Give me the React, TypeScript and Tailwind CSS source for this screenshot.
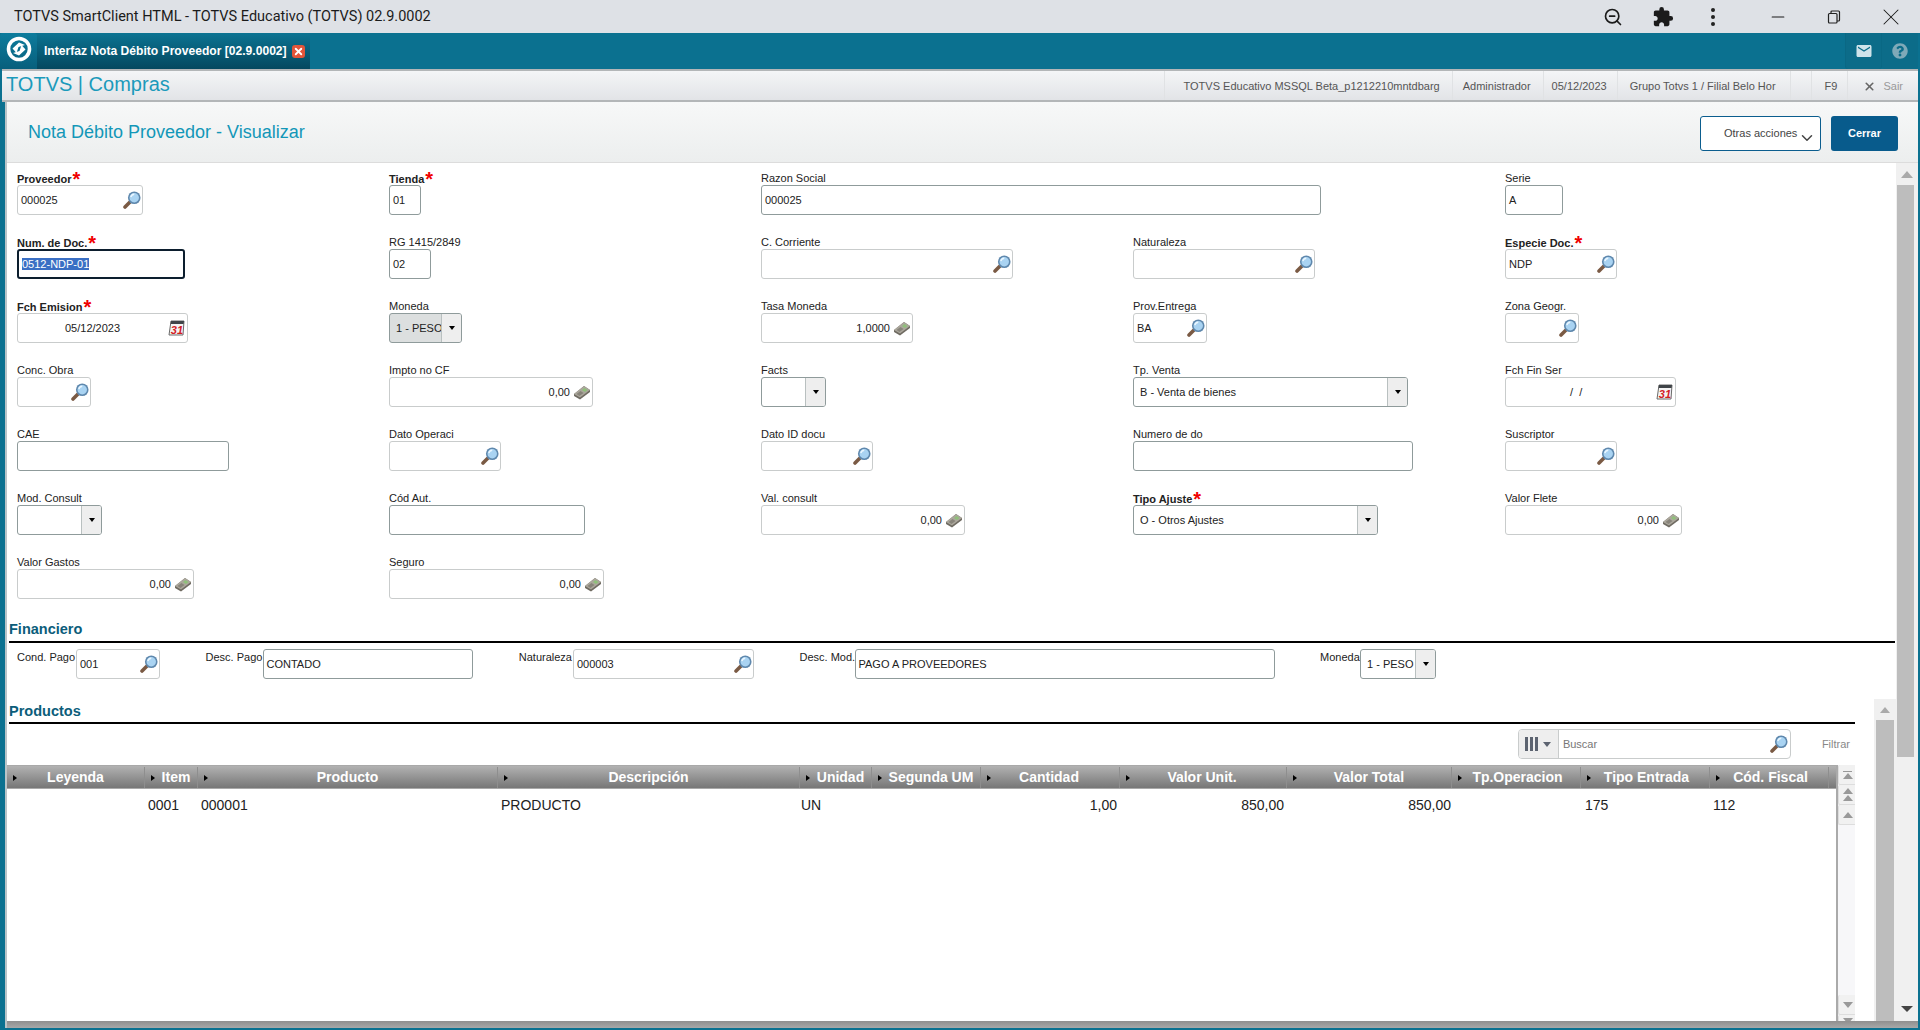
import { Minus, X, ZoomOut, ChevronDown } from "lucide-react";
import { FaQuestionCircle } from "react-icons/fa";
import { MdEmail, MdExtension } from "react-icons/md";

type FieldDef = {
    w: number
    label?: string
    req?: boolean
    value?: string
    kind?: "text" | "lookup" | "money" | "date" | "select"
    pl?: number
    disabled?: boolean
    focus?: boolean
}

function Lens() {
    return <svg width="18" height="18" viewBox="1 1 16 16" className="shrink-0">
        <line x1="7" y1="11" x2="2.8" y2="15.2" stroke="#7a5a44" strokeWidth="3.2" strokeLinecap="round" />
        <circle cx="11" cy="7" r="5.6" fill="#5f88ad" />
        <circle cx="11" cy="7" r="4.2" fill="#a9d3f2" />
        <path d="M8 6.5a3.2 3.2 0 0 1 3-2.7" stroke="#e9f6ff" strokeWidth="1.3" fill="none" />
    </svg>
}

function Money() {
    return <svg width="18" height="15" viewBox="0 0 18 15" className="shrink-0">
        <polygon points="1,9 11,1 17,5 17,7 7,14.5 1,11" fill="#6f6b62" />
        <polygon points="1,9 11,1 17,5 7,12.5" fill="#aba79c" />
        <polygon points="9,5 11.5,3 14.5,5 12,7" fill="#8fc07a" />
        <polygon points="3.5,9 7.5,6 10.5,8 6.5,11" fill="#88847a" />
    </svg>
}

function Calendar() {
    return <svg width="17" height="18" viewBox="0 0 17 18" className="shrink-0">
        <polygon points="3,2 16,2 15,16 1,16" fill="#f4f4f4" stroke="#6a6a6a" strokeWidth="1" />
        <polygon points="3,2 16,2 15.6,5 2.6,5" fill="#3f4448" />
        <text x="2.8" y="14.8" fontSize="11" fontWeight="700" fontStyle="italic" fill="#d3201f" fontFamily="Liberation Sans, sans-serif">31</text>
    </svg>
}

function Caret() {
    return <div className="flex h-full w-[20px] shrink-0 items-center justify-center border-l border-[#b9c0c0] bg-[#eeeeee]">
        <div className="h-0 w-0 border-x-[3.5px] border-t-[4px] border-x-transparent border-t-black"></div>
    </div>
}

function Field({ f }: { f: FieldDef }) {
    const kind = f.kind || "text"
    const dark = kind === "text" || kind === "select"
    let border = dark ? "border border-[#8f9b9b]" : "border border-[#c9cccc]"
    if (f.focus) border = "border-2 border-[#0c1e2e]"
    return <div className={`flex h-[30px] items-center overflow-hidden rounded-[3px] text-[11px] text-[#222] ${border} ${f.disabled ? "bg-[#dcdfdf]" : "bg-white"}`} style={{ width: f.w }}>
        <div className={`min-w-0 flex-1 overflow-hidden whitespace-nowrap ${kind === "money" ? "pr-[3px] text-right" : "pl-[3px]"} ${kind === "select" ? "pl-[6px]" : ""}`} style={f.pl ? { paddingLeft: f.pl } : undefined}>
            {f.focus ? <span className="bg-[#3a6fc4] text-white">{f.value}</span> : f.value}
        </div>
        {kind === "lookup" && <div className="mr-[1px] flex"><Lens /></div>}
        {kind === "money" && <div className="mr-[1px] flex"><Money /></div>}
        {kind === "date" && <div className="mr-[2px] flex"><Calendar /></div>}
        {kind === "select" && <Caret />}
    </div>
}

function Cell({ f }: { f: FieldDef }) {
    return <div>
        <div className={`flex h-[15px] items-end text-[11px] text-[#222] ${f.req ? "leading-[11px] font-bold" : "leading-[13px]"}`}>
            {f.label}
            {f.req && <span className="ml-[1px] mt-[2px] self-start text-[20px] leading-[14px] font-bold text-[#f00000]">*</span>}
        </div>
        <Field f={f} />
    </div>
}

const rows: (FieldDef | null)[][] = [
    [
        { w: 126, label: "Proveedor", req: true, value: "000025", kind: "lookup" },
        { w: 32, label: "Tienda", req: true, value: "01" },
        { w: 560, label: "Razon Social", value: "000025" },
        null,
        { w: 58, label: "Serie", value: "A" },
    ],
    [
        { w: 168, label: "Num. de Doc.", req: true, value: "0512-NDP-01", focus: true },
        { w: 42, label: "RG 1415/2849", value: "02" },
        { w: 252, label: "C. Corriente", kind: "lookup" },
        { w: 182, label: "Naturaleza", kind: "lookup" },
        { w: 112, label: "Especie Doc.", req: true, value: "NDP", kind: "lookup" },
    ],
    [
        { w: 171, label: "Fch Emision", req: true, value: "05/12/2023", kind: "date", pl: 47 },
        { w: 73, label: "Moneda", value: "1 - PESO", kind: "select", disabled: true },
        { w: 152, label: "Tasa Moneda", value: "1,0000", kind: "money" },
        { w: 74, label: "Prov.Entrega", value: "BA", kind: "lookup" },
        { w: 74, label: "Zona Geogr.", kind: "lookup" },
    ],
    [
        { w: 74, label: "Conc. Obra", kind: "lookup" },
        { w: 204, label: "Impto no CF", value: "0,00", kind: "money" },
        { w: 65, label: "Facts", kind: "select" },
        { w: 275, label: "Tp. Venta", value: "B - Venta de bienes", kind: "select" },
        { w: 171, label: "Fch Fin Ser", value: "/\u00a0\u00a0/", kind: "date", pl: 64 },
    ],
    [
        { w: 212, label: "CAE" },
        { w: 112, label: "Dato Operaci", kind: "lookup" },
        { w: 112, label: "Dato ID docu", kind: "lookup" },
        { w: 280, label: "Numero de do" },
        { w: 112, label: "Suscriptor", kind: "lookup" },
    ],
    [
        { w: 85, label: "Mod. Consult", kind: "select" },
        { w: 196, label: "Cód Aut." },
        { w: 204, label: "Val. consult", value: "0,00", kind: "money" },
        { w: 245, label: "Tipo Ajuste", req: true, value: "O - Otros Ajustes", kind: "select" },
        { w: 177, label: "Valor Flete", value: "0,00", kind: "money" },
    ],
    [
        { w: 177, label: "Valor Gastos", value: "0,00", kind: "money" },
        { w: 215, label: "Seguro", value: "0,00", kind: "money" },
        null,
        null,
        null,
    ],
]

const columns = [
    { name: "Leyenda", w: 138, value: "", cls: "", head: "pr-[10px]" },
    { name: "Item", w: 53, value: "0001", cls: "pl-[3px]", head: "" },
    { name: "Producto", w: 300, value: "000001", cls: "pl-[3px]", head: "pr-[10px]" },
    { name: "Descripción", w: 302, value: "PRODUCTO", cls: "pl-[3px]", head: "pr-[10px]" },
    { name: "Unidad", w: 72, value: "UN", cls: "pl-[1px]", head: "" },
    { name: "Segunda UM", w: 109, value: "", cls: "", head: "" },
    { name: "Cantidad", w: 139, value: "1,00", cls: "pr-[3px] text-right", head: "pr-[12px]" },
    { name: "Valor Unit.", w: 167, value: "850,00", cls: "pr-[3px] text-right", head: "pr-[12px]" },
    { name: "Valor Total", w: 165, value: "850,00", cls: "pr-[1px] text-right", head: "pr-[10px]" },
    { name: "Tp.Operacion", w: 129, value: "", cls: "", head: "pr-[7px]" },
    { name: "Tipo Entrada", w: 129, value: "175", cls: "pl-[4px]", head: "pr-[7px]" },
    { name: "Cód. Fiscal", w: 119, value: "112", cls: "pl-[3px]", head: "pr-[7px]" },
]

const fin = [
    { label: "Cond. Pago", lw: 59, f: { w: 84, value: "001", kind: "lookup" } as FieldDef },
    { label: "Desc. Pago", lw: 57, f: { w: 210, value: "CONTADO" } as FieldDef },
    { label: "Naturaleza", lw: 55, f: { w: 181, value: "000003", kind: "lookup" } as FieldDef },
    { label: "Desc. Mod.", lw: 55, f: { w: 420, value: "PAGO A PROVEEDORES" } as FieldDef },
    { label: "Moneda", lw: 40, f: { w: 76, value: "1 - PESO", kind: "select" } as FieldDef },
]

function ScrollBtn({ down, double, bar }: { down?: boolean, double?: boolean, bar?: boolean }) {
    const arrow = down ? "border-t-[6px] border-t-[#999]" : "border-b-[6px] border-b-[#999]"
    return <div className="flex h-[20px] w-[18px] flex-col items-center justify-center gap-[1px] rounded-[2px] border-b border-l border-[#dddddd] bg-[#f1f1f1]">
        {bar && !down && <div className="h-[1px] w-[9px] bg-[#999]"></div>}
        <div className={`h-0 w-0 border-x-[5px] border-x-transparent ${arrow}`}></div>
        {double && <div className={`h-0 w-0 border-x-[5px] border-x-transparent ${arrow}`}></div>}
        {bar && down && <div className="h-[1px] w-[9px] bg-[#999]"></div>}
    </div>
}

export default function App() {
    return <div className="flex h-[1030px] w-[1920px] flex-col overflow-hidden bg-[#0b7190] font-['Liberation_Sans',Arial,sans-serif]">
        {/* window title */}
        <div className="flex h-[33px] shrink-0 items-center bg-[#dee1e6] pl-[14px] text-[#1b1b1b]">
            <div className="font-['Roboto',sans-serif] text-[14.5px]">TOTVS SmartClient HTML - TOTVS Educativo (TOTVS) 02.9.0002</div>
            <div className="ml-auto flex items-center">
                <ZoomOut size={20} strokeWidth={2} className="mr-[29px]" />
                <MdExtension size={22} className="mr-[37px]" />
                <div className="mr-[53px] flex flex-col gap-[3px]">
                    <div className="h-[4px] w-[4px] rounded-full bg-[#222]"></div>
                    <div className="h-[4px] w-[4px] rounded-full bg-[#222]"></div>
                    <div className="h-[4px] w-[4px] rounded-full bg-[#222]"></div>
                </div>
                <Minus size={20} strokeWidth={1.3} className="mr-[39px]" />
                <svg width="14" height="14" viewBox="0 0 14 14" className="mr-[36px]" fill="none" stroke="#222" strokeWidth="1.2">
                    <rect x="1.5" y="3.5" width="8.5" height="9.5" rx="1" />
                    <path d="M4 3.5V2a1 1 0 0 1 1-1h6.5a1 1 0 0 1 1 1v8a1 1 0 0 1-1 1H10" />
                </svg>
                <X size={28} strokeWidth={0.9} className="mr-[15px]" />
            </div>
        </div>

        {/* tab bar */}
        <div className="flex h-[36px] shrink-0 items-stretch text-white">
            <div className="flex w-[37px] items-center justify-center rounded-t-[3px] bg-gradient-to-b from-[#0d7c9d] to-[#085f7c] pb-[5px]">
                <svg width="26" height="26" viewBox="0 0 26 26" fill="none">
                    <circle cx="13" cy="13" r="10.5" stroke="#fff" strokeWidth="3.6" />
                    <path d="M6.5 12.5L13 6.5l6 2.5-6.5 2-2 6z" fill="#fff" />
                    <path d="M19.5 13.5L13 19.5l-6-2.5 6.5-2 2-6z" fill="#fff" />
                </svg>
            </div>
            <div className="flex w-[273px] items-center rounded-t-[2px] bg-gradient-to-b from-[#0c7493] to-[#05485f] pl-[7px]">
                <div className="text-[12.1px] font-bold whitespace-nowrap">Interfaz Nota Débito Proveedor [02.9.0002]</div>
                <div className="ml-[5px] flex h-[13px] w-[13px] items-center justify-center rounded-[3px] bg-[#e2553a]">
                    <X size={11} strokeWidth={4} color="#fff" />
                </div>
            </div>
            <div className="ml-auto flex w-[37px] items-center justify-center rounded-b-[3px] border-x border-[#0a6884] bg-[#0c6c89]">
                <MdEmail size={18} color="#cfe3ea" />
            </div>
            <div className="mr-[2px] flex w-[36px] items-center justify-center rounded-b-[3px] bg-[#0c6c89]">
                <FaQuestionCircle size={16} color="#7fa9b8" />
            </div>
        </div>

        {/* app header */}
        <div className="ml-[2px] mr-[2px] flex h-[33px] shrink-0 items-center border-y-2 border-[#b3b6b8] bg-gradient-to-b from-[#f4f5f7] to-[#e2e4e7] text-[11px] text-[#555]">
            <div className="ml-[4px] pb-[4px] text-[20px] leading-none text-[#1b9abb]">TOTVS | Compras</div>
            <div className="ml-auto flex h-full items-center">
                <div className="flex h-full items-center border-l border-[#e0e2e4] pl-[19px] pr-[12px] pt-[2px]">TOTVS Educativo MSSQL Beta_p1212210mntdbarg</div>
                <div className="flex h-full items-center border-l border-[#e0e2e4] pl-[10px] pr-[12px] pt-[2px]">Administrador</div>
                <div className="flex h-full items-center border-l border-[#e0e2e4] pl-[8px] pr-[10px] pt-[2px]">05/12/2023</div>
                <div className="flex h-full items-center border-l border-[#e0e2e4] pl-[12px] pr-[14px] pt-[2px]">Grupo Totvs 1 / Filial Belo Hor</div>
                <div className="flex h-full w-[21px] items-center border-l border-[#e0e2e4]"></div>
                <div className="flex h-full items-center border-l border-[#e0e2e4] pl-[13px] pr-[10px] pt-[2px]">F9</div>
                <div className="flex h-full items-center border-l border-[#e0e2e4] pl-[15px] pr-[15px] pt-[2px] text-[#999]">
                    <X size={13} strokeWidth={3} color="#666" className="mr-[7px]" />Sair
                </div>
            </div>
        </div>

        {/* body */}
        <div className="ml-[5px] mr-[2px] flex h-[926px] shrink-0 flex-col border-l-2 border-[#b9c4c8] bg-white">
            <div className="flex h-[61px] shrink-0 items-center border-b border-[#dcdcdc] bg-gradient-to-b from-[#f7f8f8] to-[#eceeee] pl-[21px]">
                <div className="pt-[1px] text-[18px] text-[#1397b8]">Nota Débito Proveedor - Visualizar</div>
                <div className="ml-auto flex items-center pr-[20px] pt-[2px]">
                    <div className="mr-[10px] flex h-[35px] w-[121px] items-center rounded-[3px] border border-[#0b5d8e] bg-white pl-[23px] pt-[1px] text-[11px] text-[#444]">
                        Otras acciones<ChevronDown size={18} strokeWidth={2} className="ml-[1px] mt-[8px]" />
                    </div>
                    <div className="flex h-[35px] w-[67px] items-center justify-center rounded-[3px] bg-[#085b8c] text-[11px] font-bold text-white">Cerrar</div>
                </div>
            </div>

            <div className="flex h-[858px] shrink-0">
                <div className="w-[1889px] shrink-0">
                    <div className="grid grid-cols-[repeat(5,372px)] auto-rows-[64px] pt-[7px] pl-[10px]">
                        {rows.flat().map(function (f, i) {
                            return f ? <Cell key={i} f={f} /> : <div key={i}></div>
                        })}
                    </div>

                    {/* Financiero */}
                    <div className="ml-[2px] mr-[1px] mt-[-1px] flex h-[26px] items-end border-b-2 border-black pb-[3px] text-[14.5px] leading-[18px] font-bold text-[#0b5d7a]">Financiero</div>
                    <div className="mt-[6px] flex h-[29px] gap-[45.5px] pl-[10px]">
                        {fin.map(function (g) {
                            return <div key={g.label} className="flex items-start">
                                <div className="pt-[1px] pr-[1px] text-right text-[11px] leading-[14px] whitespace-nowrap text-[#222]" style={{ width: g.lw }}>{g.label}</div>
                                <Field f={g.f} />
                            </div>
                        })}
                    </div>

                    {/* Productos */}
                    <div className="mt-[21px] flex h-[322px]">
                        <div className="w-[1848px] shrink-0">
                            <div className="ml-[2px] flex h-[25px] items-end border-b-2 border-black pb-[2px] text-[14.5px] leading-[18px] font-bold text-[#0b5d7a]">Productos</div>
                            <div className="mt-[5px] flex h-[30px] items-center justify-end">
                                <div className="flex h-[30px] w-[273px] items-stretch overflow-hidden rounded-[4px] border border-[#c9cccc]">
                                    <div className="flex w-[40px] items-center justify-center gap-[5px] border-r border-[#c9cccc] bg-[#eeeeee]">
                                        <div className="flex gap-[2px]">
                                            <div className="h-[14px] w-[3px] bg-[#5c6370]"></div>
                                            <div className="h-[14px] w-[3px] bg-[#5c6370]"></div>
                                            <div className="h-[14px] w-[3px] bg-[#5c6370]"></div>
                                        </div>
                                        <div className="h-0 w-0 border-x-[4px] border-t-[5px] border-x-transparent border-t-[#5c6370]"></div>
                                    </div>
                                    <div className="flex flex-1 items-center pl-[4px] text-[11px] text-[#777]">Buscar</div>
                                    <div className="mr-[2px] flex items-center"><Lens /></div>
                                </div>
                                <div className="ml-[31px] mr-[5px] text-[11px] text-[#888]">Filtrar</div>
                            </div>
                            <div className="mt-[6px] flex h-[256px]">
                                <div className="w-[1829px] shrink-0">
                                    <div className="flex h-[24px] border-y border-[#a9a9a9] bg-gradient-to-b from-[#b2b2b2] to-[#777777] pt-[1px] text-[14px] font-bold text-white">
                                        {columns.map(function (c) {
                                            return <div key={c.name} className={`flex items-center border-r border-[#8e8e8e] pl-[6px] whitespace-nowrap ${c.head}`} style={{ width: c.w }}>
                                                <div className="h-0 w-0 shrink-0 border-y-[3.5px] border-l-[4px] border-y-transparent border-l-black"></div>
                                                <div className="flex-1 text-center">{c.name}</div>
                                            </div>
                                        })}
                                        <div className="flex-1"></div>
                                    </div>
                                    <div className="flex h-[32px] items-center text-[14px] text-[#222]">
                                        {columns.map(function (c) {
                                            return <div key={c.name} className={`whitespace-nowrap ${c.cls}`} style={{ width: c.w }}>{c.value}</div>
                                        })}
                                    </div>
                                </div>
                                <div className="flex w-[19px] shrink-0 flex-col justify-between overflow-hidden border-l-2 border-[#aaaaaa] bg-[#f7f7f9]">
                                    <div>
                                        <ScrollBtn bar />
                                        <ScrollBtn double />
                                        <ScrollBtn />
                                    </div>
                                    <div className="mb-[-14px]">
                                        <ScrollBtn down />
                                        <ScrollBtn down double />
                                    </div>
                                </div>
                            </div>
                        </div>
                        {/* inner scroll */}
                        <div className="ml-[19px] flex w-[22px] shrink-0 flex-col bg-[#f0f0f0] pl-[2px] pr-[2px]">
                            <div className="flex h-[21px] shrink-0 items-center justify-center">
                                <div className="h-0 w-0 border-x-[5px] border-b-[6px] border-x-transparent border-b-[#aaaaaa]"></div>
                            </div>
                            <div className="flex-1 bg-[#bdbdbd]"></div>
                        </div>
                    </div>
                </div>
                {/* main scroll */}
                <div className="flex flex-1 flex-col bg-[#f0f0f0]">
                    <div className="flex h-[22px] shrink-0 items-center justify-center">
                        <div className="h-0 w-0 border-x-[6px] border-b-[7px] border-x-transparent border-b-[#aaaaaa]"></div>
                    </div>
                    <div className="mr-[4px] ml-[1px] h-[572px] shrink-0 bg-[#bdbdbd]"></div>
                    <div className="mt-auto flex h-[15px] items-start justify-center">
                        <div className="h-0 w-0 border-x-[6px] border-t-[6px] border-x-transparent border-t-[#444]"></div>
                    </div>
                </div>
            </div>
            <div className="h-[7px] shrink-0 bg-gradient-to-b from-[#8f8f8f] to-[#a8a8a8]"></div>
        </div>
    </div>
}
